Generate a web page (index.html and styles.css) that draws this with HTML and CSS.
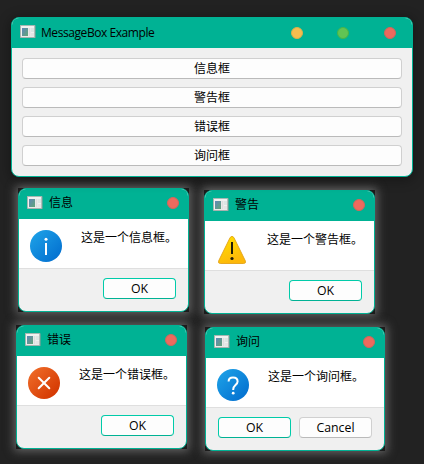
FILE: index.html
```html
<!DOCTYPE html>
<html lang="zh-CN">
<head>
<meta charset="utf-8">
<title>MessageBox Example</title>
<link rel="stylesheet" href="styles.css">
</head>
<body>
<svg class="defs" width="0" height="0" aria-hidden="true">
  <defs>
    <linearGradient id="blue" x1="0" y1="0" x2="1" y2="1"><stop offset="0.1" stop-color="#1c9fe6"/><stop offset="0.9" stop-color="#0370d0"/></linearGradient>
    <linearGradient id="red" x1="0" y1="0" x2="1" y2="1"><stop offset="0.1" stop-color="#ee6a27"/><stop offset="0.9" stop-color="#d33600"/></linearGradient>
    <linearGradient id="yellow" x1="0" y1="0" x2="0.4" y2="1"><stop offset="0" stop-color="#ffe100"/><stop offset="1" stop-color="#fdb80a"/></linearGradient>
    <linearGradient id="pane" x1="0" y1="0" x2="1" y2="1"><stop offset="0" stop-color="#5f87b8"/><stop offset="1" stop-color="#62a578"/></linearGradient>
    <symbol id="app" viewBox="0 0 16 14">
      <rect x="0.5" y="0.5" width="15" height="12.5" fill="#8d9996"/>
      <rect x="0.5" y="0.5" width="14.2" height="11.8" fill="#f1f1f0" stroke="#a9b3b0" stroke-width="0.8"/>
      <rect x="2" y="3" width="6" height="8" fill="url(#pane)"/>
      <rect x="8.6" y="3" width="1.8" height="8" fill="#dedede"/>
      <rect x="11" y="3" width="3" height="4" fill="#dce6e4"/>
      <rect x="11" y="8" width="3" height="3" fill="#e5e5e5"/>
    </symbol>
  </defs>
</svg>

<main class="desktop">
  <section class="window dialog info">
    <header class="titlebar"><svg class="app-icon"><use href="#app"/></svg><h2>信息</h2><i class="dot close"></i></header>
    <div class="message">
      <svg class="symbol" viewBox="0 0 32 32"><circle cx="16" cy="16" r="16" fill="url(#blue)"/><circle cx="16" cy="9.2" r="1.5" fill="#fff"/><path d="M16 13v12" stroke="#fff" stroke-width="2"/></svg>
      <p>这是一个信息框。</p>
    </div>
    <footer class="actions"><button class="default">OK</button></footer>
  </section>

  <section class="window dialog warning">
    <header class="titlebar"><svg class="app-icon"><use href="#app"/></svg><h2>警告</h2><i class="dot close"></i></header>
    <div class="message">
      <svg class="symbol" viewBox="0 0 32 32"><path d="M14.1 5.6Q16 2.9 17.9 5.6L29.3 28.8Q30.3 31.4 27.7 31.5H4.3Q1.7 31.4 2.7 28.8Z" fill="url(#yellow)" stroke="#e3a31a" stroke-width="0.9"/><path d="M16 10v12" stroke="#1e1b08" stroke-width="2"/><circle cx="16" cy="26.5" r="1.6" fill="#1e1b08"/></svg>
      <p>这是一个警告框。</p>
    </div>
    <footer class="actions"><button class="default">OK</button></footer>
  </section>

  <section class="window dialog error">
    <header class="titlebar"><svg class="app-icon"><use href="#app"/></svg><h2>错误</h2><i class="dot close"></i></header>
    <div class="message">
      <svg class="symbol" viewBox="0 0 32 32"><circle cx="16" cy="16" r="16" fill="url(#red)"/><path d="M10.7 10.7l10.6 10.6M21.3 10.7L10.7 21.3" stroke="#fff" stroke-width="2" stroke-linecap="round"/></svg>
      <p>这是一个错误框。</p>
    </div>
    <footer class="actions"><button class="default">OK</button></footer>
  </section>

  <section class="window dialog question">
    <header class="titlebar"><svg class="app-icon"><use href="#app"/></svg><h2>询问</h2><i class="dot close"></i></header>
    <div class="message">
      <svg class="symbol" viewBox="0 0 32 32"><circle cx="16" cy="16" r="16" fill="url(#blue)"/><path d="M11.6 12.6C11.6 9.9 13.4 8.5 16 8.5S20.6 10 20.6 12.5C20.6 16 16.2 16.3 16.2 20.4V21" fill="none" stroke="#fff" stroke-width="2"/><circle cx="16.2" cy="24.2" r="1.4" fill="#fff"/></svg>
      <p>这是一个询问框。</p>
    </div>
    <footer class="actions"><button class="default">OK</button><button>Cancel</button></footer>
  </section>

  <section class="window primary">
    <header class="titlebar"><svg class="app-icon"><use href="#app"/></svg><h1>MessageBox Example</h1><div class="controls"><i class="dot minimize"></i><i class="dot maximize"></i><i class="dot close"></i></div></header>
    <div class="choices">
      <button>信息框</button>
      <button>警告框</button>
      <button>错误框</button>
      <button>询问框</button>
    </div>
  </section>
</main>
</body>
</html>
```
FILE: styles.css
```css
* { box-sizing: border-box; }
body {
  margin: 0;
  background: #222;
  color: #000;
  font: 12px/16px "Open Sans", "Noto Sans CJK SC", sans-serif;
}
.defs { position: absolute; }
.desktop { position: relative; z-index: 0; width: 424px; height: 464px; overflow: hidden; }

.window {
  position: absolute;
  display: flex;
  flex-direction: column;
  border: 1px solid #00b294;
  border-radius: 8px;
  background: #f0f0f0;
}
.primary {
  left: 11px; top: 17px; width: 402px; height: 160px;
  box-shadow: 0 2px 12px 2px rgba(0, 0, 0, .3);
}
.dialog { width: 171px; height: 124px; }
.dialog::before {
  content: "";
  position: absolute;
  inset: -1px;
  z-index: -1;
  background: #1c1c1c;
  box-shadow: 0 0 9px 2px rgba(150, 150, 150, .6);
}
.info { left: 18px; top: 188px; }
.warning { left: 204px; top: 190px; }
.error { left: 16px; top: 325px; }
.question { left: 205px; top: 327px; width: 180px; }

.titlebar {
  display: flex;
  align-items: center;
  flex: none;
  height: 30px;
  padding: 0 9px 2px 8px;
  border-radius: 7px 7px 0 0;
  background: #00b294;
}
.titlebar h1, .titlebar h2 { margin: 0 auto 0 6px; font-size: 12px; font-weight: 400; white-space: nowrap; }
.titlebar h1 { margin-left: 5px; letter-spacing: -.43px; padding-top: 2px; }
.primary .titlebar { padding-right: 16px; }
.app-icon { width: 16px; height: 14px; flex: none; }
.controls { display: flex; gap: 34px; padding-top: 2px; }
.controls .close { margin-left: 1px; }
.dot { width: 12px; height: 12px; border-radius: 50%; }
.minimize { background: #f5bd4f; border: 1px solid #d9b04b; }
.maximize { background: #61c454; border: 1px solid #45b549; }
.close { background: #ed6a5e; border: 1px solid #d3655a; }

.choices { display: flex; flex-direction: column; gap: 8px; padding: 10px; }
button {
  height: 21px;
  padding: 0;
  border: 1px solid #d0d0d0;
  border-bottom-color: #bababa;
  border-radius: 4px;
  background: #fdfdfd;
  color: #000;
  font: inherit;
  line-height: 18px;
}
.default { border-color: #00cba9; border-bottom-color: #00b294; }

.message { display: flex; gap: 19px; height: 49px; padding: 11px 11px 0; background: #fff; }
.symbol { width: 32px; height: 32px; flex: none; }
.message p { margin: 0; white-space: nowrap; }
.actions {
  display: flex;
  flex: 1;
  justify-content: flex-end;
  gap: 8px;
  padding: 9px 12px;
  border-top: 1px solid #dfdfdf;
}
.actions button { width: 73px; font-size: 12.3px; }
```
